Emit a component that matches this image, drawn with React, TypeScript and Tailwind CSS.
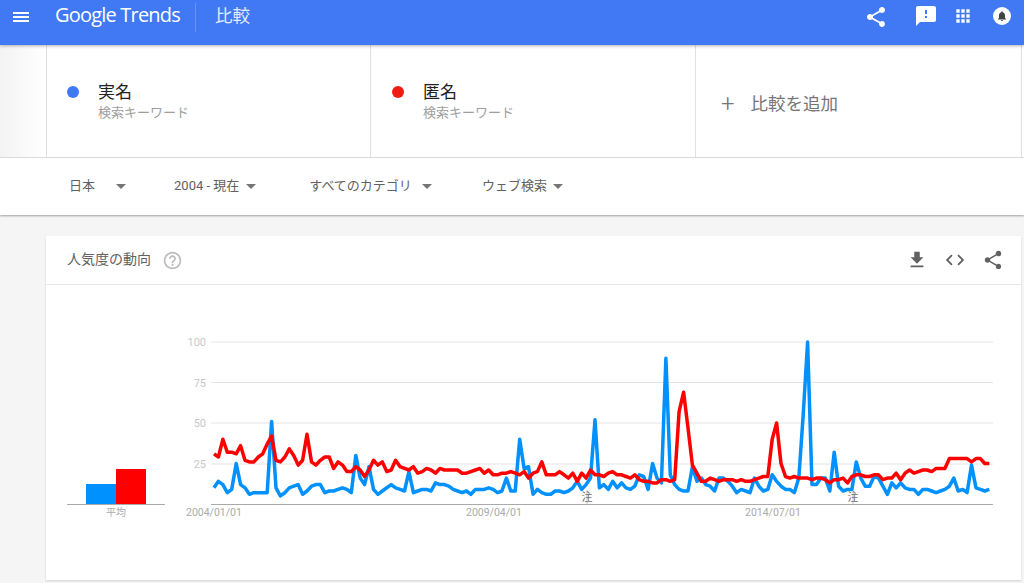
const FONT = "font-['Roboto','Noto_Sans_CJK_JP',sans-serif]"

const SHARE =
  'M18 16.08c-.76 0-1.44.3-1.96.77L8.91 12.7c.05-.23.09-.46.09-.7s-.04-.47-.09-.7l7.05-4.11c.54.5 1.25.81 2.04.81 1.66 0 3-1.34 3-3s-1.34-3-3-3-3 1.34-3 3c0 .24.04.47.09.7L8.04 9.81C7.5 9.31 6.79 9 6 9c-1.66 0-3 1.34-3 3s1.34 3 3 3c.79 0 1.5-.31 2.04-.81l7.12 4.16c-.05.21-.08.43-.08.65 0 1.61 1.31 2.92 2.92 2.92 1.61 0 2.92-1.31 2.92-2.92s-1.31-2.92-2.92-2.92z'
const FEEDBACK =
  'M20 2H4c-1.1 0-1.99.9-1.99 2L2 22l4-4h14c1.1 0 2-.9 2-2V4c0-1.1-.9-2-2-2zm-7 12h-2v-2h2v2zm0-4h-2V6h2v4z'
const APPS =
  'M4 8h4V4H4v4zm6 12h4v-4h-4v4zm-6 0h4v-4H4v4zm0-6h4v-4H4v4zm6 0h4v-4h-4v4zm6-10v4h4V4h-4zm-6 4h4V4h-4v4zm6 6h4v-4h-4v4zm0 6h4v-4h-4v4z'
const BELL =
  'M12 22c1.1 0 2-.9 2-2h-4c0 1.1.89 2 2 2zm6-6v-5c0-3.07-1.64-5.64-4.5-6.32V4c0-.83-.67-1.5-1.5-1.5s-1.5.67-1.5 1.5v.68C7.63 5.36 6 7.92 6 11v5l-2 2v1h16v-1l-2-2z'
const DOWNLOAD = 'M19 9h-4V3H9v6H5l7 7 7-7zM5 18v2h14v-2H5z'
const CODE =
  'M9.4 16.6L4.8 12l4.6-4.6L8 6l-6 6 6 6 1.4-1.4zm5.2 0l4.6-4.6-4.6-4.6L16 6l6 6-6 6-1.4-1.4z'
const HELP =
  'M11 18h2v-2h-2v2zm1-16C6.48 2 2 6.48 2 12s4.48 10 10 10 10-4.48 10-10S17.52 2 12 2zm0 18c-4.41 0-8-3.59-8-8s3.59-8 8-8 8 3.59 8 8-3.59 8-8 8zm0-14c-2.21 0-4 1.79-4 4h2c0-1.1.9-2 2-2s2 .9 2 2c0 2-3 1.75-3 5h2c0-2.25 3-2.5 3-5 0-2.21-1.79-4-4-4z'

const blue = [
  10, 14, 12, 7, 9, 25, 12, 10, 6, 7, 7, 7, 7, 51, 10, 5, 7, 10, 11, 12, 6, 8, 11, 12, 12, 7, 8, 8, 9, 10, 9, 7, 30, 16, 12,
  23, 9, 6, 8, 10, 12, 10, 9, 8, 20, 7, 8, 9, 9, 8, 13, 12, 12, 11, 9, 8, 7, 8, 6, 9, 9, 9, 10, 9, 7, 8, 16, 8, 8, 40, 22,
  23, 6, 9, 7, 6, 6, 8, 8, 7, 8, 10, 14, 9, 12, 16, 52, 10, 12, 9, 14, 10, 13, 10, 9, 11, 18, 17, 9, 25, 16, 13, 90, 18,
  12, 9, 8, 8, 23, 14, 16, 12, 11, 8, 16, 16, 14, 11, 7, 9, 8, 7, 16, 11, 8, 9, 18, 14, 11, 9, 9, 7, 16, 55, 100, 12, 12, 16, 16,
  8, 32, 11, 8, 9, 9, 26, 16, 11, 11, 17, 16, 11, 6, 13, 10, 13, 10, 9, 9, 6, 9, 9, 8, 7, 8, 9, 11, 16, 8, 9, 7, 24, 10, 9,
  8, 9,
]

const red = [
  31, 29, 40, 32, 32, 31, 36, 27, 26, 26, 29, 31, 37, 42, 27, 26, 29, 34, 30, 24, 27, 43, 26, 24, 27, 29, 29, 22, 26, 24, 20,
  20, 23, 21, 17, 21, 27, 24, 26, 20, 21, 27, 23, 22, 21, 23, 19, 20, 22, 21, 19, 22, 21, 21, 21, 21, 19, 19, 20, 21, 22, 19,
  21, 18, 18, 19, 19, 20, 19, 18, 20, 16, 19, 20, 26, 18, 18, 18, 20, 18, 16, 19, 14, 19, 16, 21, 18, 18, 17, 19, 20, 18, 18,
  17, 16, 18, 15, 14, 14, 13, 13, 15, 15, 14, 15, 57, 69, 47, 24, 19, 14, 14, 16, 15, 14, 15, 15, 15, 14, 15, 14, 14, 15, 16,
  17, 17, 40, 50, 25, 17, 16, 17, 16, 16, 16, 15, 16, 16, 15, 13, 15, 15, 16, 13, 17, 18, 18, 17, 17, 18, 18, 15, 16, 16, 19,
  15, 19, 21, 19, 20, 21, 21, 20, 22, 22, 22, 28, 28, 28, 28, 28, 26, 28, 28, 25, 25,
]

const toPoints = (values: number[]) =>
  values.map((v, i) => `${(214 + i * 4.43).toFixed(1)},${(504 - v * 1.62).toFixed(1)}`).join(' ')

const Icon = ({ d, className }: { d: string; className: string }) => (
  <svg viewBox="0 0 24 24" className={className} fill="currentColor">
    <path d={d} />
  </svg>
)

const Caret = ({ className }: { className: string }) => (
  <span className={`block w-0 h-0 mt-px border-x-[5px] border-x-transparent border-t-[5px] border-t-[#757575] ${className}`} />
)

const Header = () => (
  <header className="relative z-20 h-[45px] bg-[#4179f5] flex items-start shadow-[0_1px_3px_rgba(0,0,0,0.3)] text-white">
    <div className="ml-[13px] mt-[12px] w-[16px] flex flex-col gap-[2px]">
      <span className="h-[2px] bg-white" />
      <span className="h-[2px] bg-white" />
      <span className="h-[2px] bg-white" />
    </div>
    <span className="ml-[26px] mt-[2px] w-[125px] text-[20px] leading-[26px] tracking-[-0.8px] font-['Open_Sans',sans-serif] whitespace-nowrap">
      Google Trends
    </span>
    <span className="ml-[15px] mt-[3px] w-px h-[29px] bg-white/20" />
    <span className="ml-[19px] mt-[4px] text-[17.5px] leading-[24px] text-white/85">比較</span>
    <div className="ml-auto flex items-start">
      <Icon d={SHARE} className="w-[24px] h-[24px] mt-[5px]" />
      <Icon d={FEEDBACK} className="w-[24px] h-[24px] mt-[4px] ml-[26px]" />
      <Icon d={APPS} className="w-[20px] h-[20px] mt-[6px] ml-[15px]" />
      <div className="w-[18px] h-[18px] mt-[7px] ml-[20px] mr-[13px] rounded-full bg-white flex items-center justify-center text-[#424242]">
        <Icon d={BELL} className="w-[12px] h-[12px]" />
      </div>
    </div>
  </header>
)

const Term = ({ name, color, className }: { name: string; color: string; className: string }) => (
  <div className={`border-r border-[#e0e0e0] flex items-start pt-[35px] ${className}`}>
    <span className={`w-[12px] h-[12px] mt-[6px] rounded-full ${color}`} />
    <div className="ml-[19px]">
      <div className="text-[17px] leading-[24px] text-[#212121]">{name}</div>
      <div className="text-[13px] leading-[18px] text-[#9e9e9e]">検索キーワード</div>
    </div>
  </div>
)

const SearchTerms = () => (
  <div className="h-[113px] flex bg-gradient-to-r from-[#f3f3f3] to-white to-[45px] border-b border-[#e0e0e0]">
    <div className="w-[47px] border-r border-[#e0e0e0]" />
    <div className="flex bg-white">
      <Term name="実名" color="bg-[#4179f5]" className="w-[324px] pl-[20px]" />
      <Term name="匿名" color="bg-[#f01c14]" className="w-[325px] pl-[21px]" />
      <div className="w-[326px] border-r border-[#e0e0e0] flex items-center pl-[25px] pt-[5px] text-[#757575]">
        <span className="text-[24px] leading-[24px] font-light">+</span>
        <span className="ml-[16px] text-[17.5px] leading-[24px]">比較を追加</span>
      </div>
    </div>
    <div className="flex-1 bg-white" />
  </div>
)

const Filters = () => (
  <div className="relative z-10 h-[57px] pb-[2px] bg-white flex items-center text-[13px] text-[#616161] shadow-[0_1px_2px_rgba(0,0,0,0.35)]">
    <span className="ml-[69px]">日本</span>
    <Caret className="ml-[21px]" />
    <span className="ml-[48px]">2004 - 現在</span>
    <Caret className="ml-[7px]" />
    <span className="ml-[53px]">すべてのカテゴリ</span>
    <Caret className="ml-[10px]" />
    <span className="ml-[50px]">ウェブ検索</span>
    <Caret className="ml-[6px]" />
  </div>
)

const Average = () => (
  <div className="w-[98px] flex flex-col">
    <div className="h-[174px] flex items-end justify-center border-b border-[#aaaaaa]">
      <div className="w-[30px] h-[20px] bg-[#0091ff]" />
      <div className="w-[30px] h-[35px] bg-[#ff0000]" />
    </div>
    <div className="text-center text-[10px] leading-[16px] text-[#aaaaaa]">平均</div>
  </div>
)

const Chart = () => (
  <svg viewBox="180 330 820 190" className="w-[820px] h-[190px] ml-[15px]">
    {[342, 382.5, 423, 464].map((y) => (
      <line key={y} x1="211" x2="993" y1={y} y2={y} stroke="#e4e4e4" strokeWidth="1" />
    ))}
    <line x1="211" x2="993" y1="504.5" y2="504.5" stroke="#aaaaaa" strokeWidth="1" />
    {[
      ['100', 342],
      ['75', 382.5],
      ['50', 423],
      ['25', 464],
    ].map(([label, y]) => (
      <text key={label} x="206" y={Number(y) + 4} textAnchor="end" fontSize="11" fill="#c8c8c8">
        {label}
      </text>
    ))}
    {[
      ['2004/01/01', 186],
      ['2009/04/01', 466],
      ['2014/07/01', 745],
    ].map(([label, x]) => (
      <text key={label} x={x} y="516" fontSize="10.5" fill="#aaaaaa">
        {label}
      </text>
    ))}
    {[587, 853].map((x) => (
      <g key={x}>
        <line x1={x} x2={x} y1="490" y2="504" stroke="#bdbdbd" strokeWidth="1" />
        <text x={x} y="501" textAnchor="middle" fontSize="11" fill="#757575">
          注
        </text>
      </g>
    ))}
    <polyline points={toPoints(blue)} fill="none" stroke="#0091ff" strokeWidth="3.5" strokeLinejoin="round" />
    <polyline points={toPoints(red)} fill="none" stroke="#ff0000" strokeWidth="3.5" strokeLinejoin="round" />
  </svg>
)

const TrendCard = () => (
  <section className="ml-[46px] mt-[21px] w-[975px] h-[344px] bg-white shadow-[0_1px_2px_rgba(0,0,0,0.15)]">
    <div className="h-[49px] border-b border-[#e8e8e8] flex items-center pl-[21px] pr-[17px]">
      <span className="text-[14px] leading-[20px] mb-[2px] text-[#616161]">人気度の動向</span>
      <Icon d={HELP} className="w-[21px] h-[21px] ml-[11px] text-[#bdbdbd]" />
      <div className="ml-auto flex items-center gap-[16px] text-[#616161]">
        <Icon d={DOWNLOAD} className="w-[22px] h-[22px]" />
        <Icon d={CODE} className="w-[22px] h-[22px]" />
        <Icon d={SHARE} className="w-[22px] h-[22px]" />
      </div>
    </div>
    <div className="flex pl-[21px]">
      <div className="pt-[46px]">
        <Average />
      </div>
      <div className="pt-[45px]">
        <Chart />
      </div>
    </div>
  </section>
)

export default function App() {
  return (
    <div className={`w-[1024px] h-[583px] overflow-hidden bg-[#f5f5f5] ${FONT}`}>
      <Header />
      <SearchTerms />
      <Filters />
      <TrendCard />
    </div>
  )
}
